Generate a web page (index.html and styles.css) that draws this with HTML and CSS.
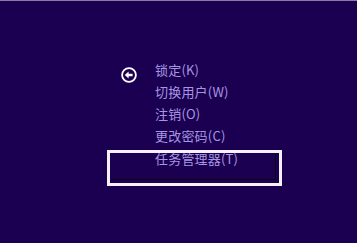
FILE: index.html
```html
<!DOCTYPE html>
<html>
<head>
<meta charset="UTF-8" />
<title>安全选项</title>
    <link rel="stylesheet" href="styles.css">
</head>
    <body>
    <div class="screen">
        <ul class="menu">
            <li class="item">
                <span class="back">
                    <svg width="16" height="16" viewBox="0 0 16 16">
                        <circle cx="8" cy="8" r="6.9" fill="none" stroke="#fff" stroke-width="1.8" />
                        <path d="M3.8 8 L7.6 4.4 L7.6 6.8 L11.6 6.8 L11.6 9.2 L7.6 9.2 L7.6 11.6 Z" fill="#fff" />
                    </svg>
                </span>
                <span class="label">锁定(K)</span>
            </li>
            <li class="item"><span class="label">切换用户(W)</span></li>
            <li class="item"><span class="label">注销(O)</span></li>
            <li class="item"><span class="label">更改密码(C)</span></li>
            <li class="item selected"><span class="label">任务管理器(T)</span></li>
        </ul>
    </div>
    </body>
</html>
```

FILE: styles.css
```css
html, body {
  margin: 0;
  height: 100%;
}
body {
  background: #1b0052;
  border-top: 1px solid #8a78a6;
  box-sizing: border-box;
  font-family: "Noto Sans CJK SC", "Noto Sans", sans-serif;
}
.screen {
  padding-top: 58px;
  padding-left: 107px;
}
.menu {
  list-style: none;
  margin: 0;
  padding: 0;
  width: 175px;
}
.item {
  display: flex;
  align-items: flex-start;
  height: 22px;
  padding-left: 48px;
  color: #a696e2;
  font-size: 13px;
  line-height: 22px;
  box-sizing: border-box;
}
.back {
  width: 16px;
  height: 16px;
  margin-left: -34px;
  margin-right: 18px;
  margin-top: 8px;
}
.back svg {
  display: block;
}
.label {
  white-space: nowrap;
  letter-spacing: 0.2px;
}
.selected {
  position: relative;
  height: 36px;
  margin-top: 3px;
  padding-left: 45px;
  border: 3px solid #f6f0f8;
  line-height: 12px;
}
.selected::after {
  content: "";
  position: absolute;
  top: 1px;
  left: 1px;
  right: 3px;
  bottom: 3px;
  border-right: 1px solid #0a0018;
  border-bottom: 1px solid #0a0018;
}
```
